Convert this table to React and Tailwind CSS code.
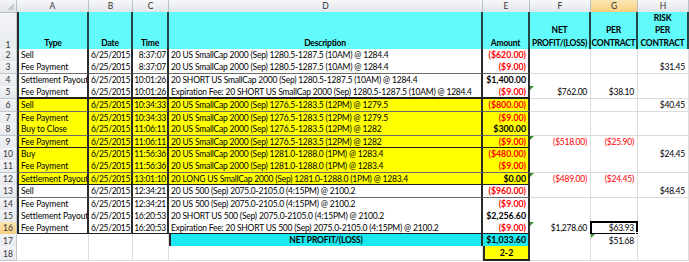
import React from "react";

const COLS = "grid grid-cols-[17px_72px_44px_36px_314px_47px_61px_47px_51px]";
const FONT = { fontFamily: "Lato, 'Liberation Sans', sans-serif" };

const RED = "text-[#ff0000]";

const rows = [
  { n: 2, h: "h-[12px]", a: "Sell", b: "6/25/2015", c: "8:37:07", d: "20 US SmallCap 2000 (Sep) 1280.5-1287.5 (10AM) @ 1284.4", e: "($620.00)" },
  { n: 3, h: "h-[13px]", a: "Fee Payment", b: "6/25/2015", c: "8:37:07", d: "20 US SmallCap 2000 (Sep) 1280.5-1287.5 (10AM) @ 1284.4", e: "($9.00)", hh: "$31.45" },
  { n: 4, h: "h-[12px]", a: "Settlement Payout", b: "6/25/2015", c: "10:01:26", d: "20 SHORT US SmallCap 2000 (Sep) 1280.5-1287.5 (10AM) @ 1284.4", e: "$1,400.00" },
  { n: 5, h: "h-[13px]", a: "Fee Payment", b: "6/25/2015", c: "10:01:26", d: "Expiration Fee: 20 SHORT US SmallCap 2000 (Sep) 1280.5-1287.5 (10AM) @ 1284.4", e: "($9.00)", f: "$762.00", g: "$38.10", flag: true, end: true },
  { n: 6, h: "h-[13px]", y: true, a: "Sell", b: "6/25/2015", c: "10:34:33", d: "20 US SmallCap 2000 (Sep) 1276.5-1283.5 (12PM) @ 1279.5", e: "($800.00)", hh: "$40.45" },
  { n: 7, h: "h-[11px]", y: true, a: "Fee Payment", b: "6/25/2015", c: "10:34:33", d: "20 US SmallCap 2000 (Sep) 1276.5-1283.5 (12PM) @ 1279.5", e: "($9.00)" },
  { n: 8, h: "h-[13px]", y: true, a: "Buy to Close", b: "6/25/2015", c: "11:06:11", d: "20 US SmallCap 2000 (Sep) 1276.5-1283.5 (12PM) @ 1282", e: "$300.00" },
  { n: 9, h: "h-[12px]", y: true, a: "Fee Payment", b: "6/25/2015", c: "11:06:11", d: "20 US SmallCap 2000 (Sep) 1276.5-1283.5 (12PM) @ 1282", e: "($9.00)", f: "($518.00)", g: "($25.90)", flag: true, end: true },
  { n: 10, h: "h-[12px]", y: true, a: "Buy", b: "6/25/2015", c: "11:56:36", d: "20 US SmallCap 2000 (Sep) 1281.0-1288.0 (1PM) @ 1283.4", e: "($480.00)", hh: "$24.45" },
  { n: 11, h: "h-[13px]", y: true, a: "Fee Payment", b: "6/25/2015", c: "11:56:36", d: "20 US SmallCap 2000 (Sep) 1281.0-1288.0 (1PM) @ 1283.4", e: "($9.00)" },
  { n: 12, h: "h-[12px]", y: true, a: "Settlement Payout", b: "6/25/2015", c: "13:01:10", d: "20 LONG US SmallCap 2000 (Sep) 1281.0-1288.0 (1PM) @ 1283.4", e: "$0.00", f: "($489.00)", g: "($24.45)", flag: true, end: true },
  { n: 13, h: "h-[13px]", a: "Sell", b: "6/25/2015", c: "12:34:21", d: "20 US 500 (Sep) 2075.0-2105.0 (4:15PM) @ 2100.2", e: "($960.00)", hh: "$48.45" },
  { n: 14, h: "h-[12px]", a: "Fee Payment", b: "6/25/2015", c: "12:34:21", d: "20 US 500 (Sep) 2075.0-2105.0 (4:15PM) @ 2100.2", e: "($9.00)" },
  { n: 15, h: "h-[12px]", a: "Settlement Payout", b: "6/25/2015", c: "16:20:53", d: "20 SHORT US 500 (Sep) 2075.0-2105.0 (4:15PM) @ 2100.2", e: "$2,256.60" },
  { n: 16, h: "h-[12px]", a: "Fee Payment", b: "6/25/2015", c: "16:20:53", d: "Expiration Fee: 20 SHORT US 500 (Sep) 2075.0-2105.0 (4:15PM) @ 2100.2", e: "($9.00)", f: "$1,278.60", g: "$63.93", flag: true, end: true, sel: true },
];

const Flag = () => (
  <span className="absolute left-0 top-0 w-0 h-0 border-t-[4px] border-t-[#2f8f2f] border-r-[4px] border-r-transparent" />
);

const RowNum = ({ n, active }) => (
  <div
    className={`flex items-end justify-center border-r border-b border-[#c3c8cf] text-[8.5px] leading-[12px] text-[#333] ${
      active ? "bg-gradient-to-b from-[#fbe6b4] to-[#f6cf7e]" : "bg-gradient-to-b from-[#f3f4f6] to-[#e6e9ed]"
    }`}
  >
    {n}
  </div>
);

// bordered cell in A..E
const Box = ({ children, y, end, left, align = "left", bold, red, className = "" }) => (
  <div
    className={`flex items-center overflow-hidden whitespace-nowrap border-r-2 border-r-[#2b2b2b] ${
      end ? "border-b-2 border-b-[#1f1f1f]" : "border-b border-b-[#6b6b6b]"
    } ${left ? "border-l-2 border-l-[#2b2b2b]" : ""} ${y ? "bg-[#ffff00]" : "bg-white"} ${
      align === "right" ? "justify-end pr-[1px]" : align === "center" ? "justify-center" : "justify-start pl-[2px]"
    } ${bold ? "font-bold" : ""} ${red ? RED : "text-black"} ${className}`}
  >
    {children}
  </div>
);

const Plain = ({ children, red, flag, sel }) => (
  <div
    className={`relative flex items-center justify-end whitespace-nowrap pr-[3px] border-r border-b border-[#dadcdd] bg-white text-[8.5px] tracking-[-0.25px] ${
      red ? RED : "text-black"
    }`}
  >
    {flag && <Flag />}
    {children}
    {sel && (
      <>
        <span className="absolute -left-[1px] -top-[1px] -right-[1px] -bottom-[1px] border-2 border-black" />
        <span className="absolute -right-[3px] -bottom-[3px] w-[5px] h-[5px] bg-black border border-white" />
      </>
    )}
  </div>
);

const neg = (v) => v && v.startsWith("(");

export default function App() {
  return (
    <div className="w-[689px] h-[262px] overflow-hidden bg-white text-[8.5px] leading-[12px] select-none" style={FONT}>
      {/* column letters */}
      <div className={`${COLS} h-[12px]`}>
        <div className="relative border-r border-b border-[#b9bfc7] bg-gradient-to-b from-[#f3f4f6] to-[#e2e5ea]">
          <span className="absolute right-[2px] bottom-[2px] w-0 h-0 border-b-[7px] border-b-[#c9cdd3] border-l-[7px] border-l-transparent" />
        </div>
        {["A", "B", "C", "D", "E", "F", "G", "H"].map((l) => (
          <div
            key={l}
            className={`flex items-center justify-center border-r border-b border-[#b9bfc7] text-[8.5px] text-[#333] ${
              l === "G" ? "bg-gradient-to-b from-[#fbe6b4] to-[#f6cf7e]" : "bg-gradient-to-b from-[#f6f7f8] to-[#e3e6ea]"
            }`}
          >
            {l}
          </div>
        ))}
      </div>

      {/* row 1 headers */}
      <div className={`${COLS} h-[37px]`}>
        <RowNum n={1} />
        {[
          ["Type"],
          ["Date"],
          ["Time"],
          ["Description"],
          ["Amount"],
          ["NET", "PROFIT/(LOSS)"],
          ["PER", "CONTRACT"],
          ["RISK", "PER", "CONTRACT"],
        ].map((lines, i) => (
          <div
            key={i}
            className={`flex flex-col items-center justify-end pb-[1px] bg-[#62fbfb] font-bold text-black text-[8.5px] leading-[12.4px] border-r-2 border-r-[#244848] border-b-2 border-b-[#1f1f1f] ${
              i === 0 ? "border-l-2 border-l-[#2b2b2b]" : ""
            } ${i >= 5 ? "tracking-[-0.25px]" : "tracking-[-0.2px]"}`}
          >
            {lines.map((t) => (
              <span key={t} className="whitespace-nowrap">
                {t}
              </span>
            ))}
          </div>
        ))}
      </div>

      {/* data rows */}
      {rows.map((r) => (
        <div key={r.n} className={`${COLS} ${r.h}`}>
          <RowNum n={r.n} active={r.sel} />
          <Box y={r.y} end={r.end} left className="tracking-[-0.1px]">
            {r.a}
          </Box>
          <Box y={r.y} end={r.end} align="right" className="tracking-[-0.35px]">
            {r.b}
          </Box>
          <Box y={r.y} end={r.end} align="right" className="tracking-[-0.25px]">
            {r.c}
          </Box>
          <Box y={r.y} end={r.end} className="tracking-[-0.2px]">
            {r.d}
          </Box>
          <Box y={r.y} end={r.end} align="right" bold red={neg(r.e)} className="text-[8.8px] pr-[2px]">
            {r.e}
          </Box>
          <Plain red={neg(r.f)} flag={r.flag}>
            {r.f}
          </Plain>
          <Plain red={neg(r.g)} sel={r.sel}>
            {r.g}
          </Plain>
          <Plain>{r.hh}</Plain>
        </div>
      ))}

      {/* row 17 */}
      <div className={`${COLS} h-[12px]`}>
        <RowNum n={17} />
        <Plain />
        <Plain />
        <Plain />
        <div className="flex items-center justify-center bg-[#1ce8ef] font-bold tracking-[-0.2px] border-r-2 border-r-[#2b2b2b] border-b-2 border-b-[#1f1f1f] border-l-2 border-l-[#2b2b2b]">
          NET PROFIT/(LOSS)
        </div>
        <div className="flex items-center justify-end pr-[2px] bg-[#1ce8ef] font-bold text-[8.8px] border-r-2 border-r-[#2b2b2b] border-b-2 border-b-[#1f1f1f]">
          $1,033.60
        </div>
        <Plain />
        <Plain flag>$51.68</Plain>
        <Plain />
      </div>

      {/* row 18 */}
      <div className={`${COLS} h-[15px]`}>
        <RowNum n={18} />
        <Plain />
        <Plain />
        <Plain />
        <Plain />
        <div className="flex items-center justify-center bg-[#ffff00] font-bold text-[8.8px] border-r-2 border-r-[#2b2b2b] border-b-2 border-b-[#1f1f1f] border-l-2 border-l-[#2b2b2b]">
          2-2
        </div>
        <Plain />
        <Plain />
        <Plain />
      </div>
    </div>
  );
}
